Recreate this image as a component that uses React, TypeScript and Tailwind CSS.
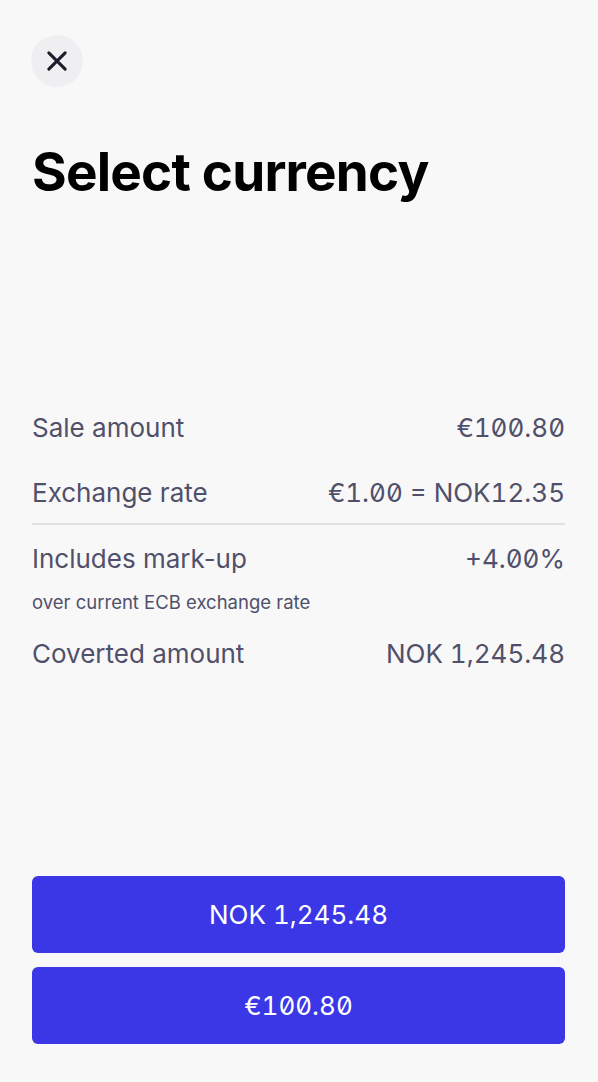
import React from "react";

const rows = [
  { label: "Sale amount", value: "€100.80" },
  { label: "Exchange rate", value: "€1.00 = NOK12.35" },
];

const App = () => {
  return (
    <div
      className="h-[1082px] w-full bg-[#f8f8f9] flex flex-col pl-8 pr-[33px]"
      style={{ fontFamily: "Inter, 'Noto Sans', sans-serif" }}
    >
      <div className="pt-[35px]">
        <button className="w-[52px] h-[52px] rounded-full bg-[#efeff1] flex items-center justify-center -ml-px">
          <svg width="28" height="28" viewBox="0 0 24 24" fill="none" stroke="#1c1c2b" strokeWidth="2.6" strokeLinecap="round">
            <path d="M5 5L19 19M19 5L5 19" />
          </svg>
        </button>
      </div>

      <h1 className="mt-[55px] text-[53px] leading-[60px] font-bold text-black tracking-[-0.015em]">Select currency</h1>

      <div className="mt-[193px] text-[#50506a] text-[26px]">
        {rows.map((r) => (
          <div key={r.label} className="flex justify-between items-center h-[65px]">
            <span>{r.label}</span>
            <span className="slashed-zero tabular-nums">{r.value}</span>
          </div>
        ))}
        <div className="h-[2px] bg-[#e1e1e6] mt-[-2px]" />
        <div className="flex justify-between items-center h-[66px]">
          <span>Includes mark-up</span>
          <span className="slashed-zero tabular-nums">+4.00%</span>
        </div>
        <div className="text-[18.5px] leading-[22px]">over current ECB exchange rate</div>
        <div className="flex justify-between items-center h-[64px] mt-[8px]">
          <span>Coverted amount</span>
          <span className="tabular-nums">NOK 1,245.48</span>
        </div>
      </div>

      <div className="mt-auto mb-[38px] flex flex-col gap-[14px]">
        <button className="h-[77px] w-full rounded-[6px] bg-[#3b37e7] text-white text-[26px] font-normal slashed-zero tabular-nums">
          NOK 1,245.48
        </button>
        <button className="h-[77px] w-full rounded-[6px] bg-[#3b37e7] text-white text-[26px] font-normal slashed-zero tabular-nums">
          €100.80
        </button>
      </div>
    </div>
  );
};

export default App;
